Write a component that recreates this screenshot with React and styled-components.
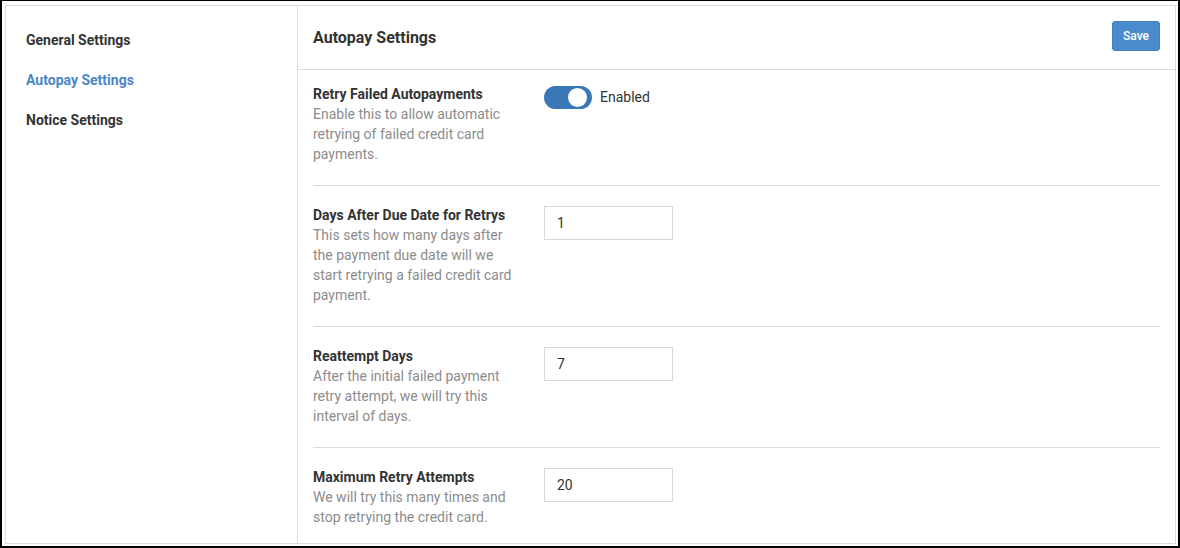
import React, { useState } from "react";
import styled, { createGlobalStyle } from "styled-components";

const GlobalStyle = createGlobalStyle`
  html, body {
    margin: 0;
    padding: 0;
    background: #fff;
  }
  body {
    font-family: Roboto, "Liberation Sans", Arial, sans-serif;
    font-size: 14px;
    color: #333;
  }
  * {
    box-sizing: border-box;
  }
`;

const Frame = styled.div`
  width: 1180px;
  height: 548px;
  display: flex;
  border-style: solid;
  border-color: #000;
  border-width: 1px 2px 2px 2px;
  padding: 4px 2px 2px 3px;
  background: #fff;
`;

const Card = styled.div`
  flex: 1;
  display: flex;
  border: 1px solid #dcdcdc;
  overflow: hidden;
`;

const Sidebar = styled.nav`
  width: 292px;
  flex-shrink: 0;
  border-right: 1px solid #dcdcdc;
  padding: 14px 20px 0;
  display: flex;
  flex-direction: column;
`;

const NavItem = styled.a`
  display: block;
  height: 40px;
  line-height: 40px;
  font-size: 14px;
  font-weight: 700;
  color: ${(p) => (p.$active ? "#4a86c6" : "#333")};
  text-decoration: none;
  cursor: pointer;
`;

const Main = styled.main`
  flex: 1;
  display: flex;
  flex-direction: column;
  min-width: 0;
`;

const Header = styled.header`
  height: 64px;
  flex-shrink: 0;
  display: flex;
  align-items: center;
  justify-content: space-between;
  padding: 0 15px 1px;
  border-bottom: 1px solid #dcdcdc;
`;

const Title = styled.h2`
  margin: 0;
  font-size: 16px;
  font-weight: 700;
  color: #333;
`;

const SaveButton = styled.button`
  width: 48px;
  height: 30px;
  border: 1px solid #3f7fbf;
  border-radius: 3px;
  background: #4a8bcb;
  color: #fff;
  font-family: inherit;
  font-size: 12px;
  font-weight: 500;
  cursor: pointer;
  margin-top: -2px;
`;

const Body = styled.div`
  padding: 0 15px;
`;

const Row = styled.div`
  display: flex;
  gap: 23px;
  padding: ${(p) => (p.$first ? "14px" : "19px")} 0 21px;
  border-bottom: ${(p) => (p.$last ? "none" : "1px solid #dcdcdc")};
`;

const LabelCol = styled.div`
  width: 208px;
  flex-shrink: 0;
  line-height: 20px;
`;

const Label = styled.div`
  font-weight: 700;
  color: #333;
`;

const Help = styled.div`
  color: #8c8c8c;
`;

const ControlCol = styled.div`
  display: flex;
  align-items: flex-start;
  gap: 8px;
  padding-top: ${(p) => p.$offset || 0}px;
`;

const Track = styled.button`
  position: relative;
  width: 48px;
  height: 23px;
  border: none;
  border-radius: 12px;
  padding: 0;
  background: ${(p) => (p.$on ? "#3a77b7" : "#ccc")};
  cursor: pointer;
`;

const Knob = styled.span`
  position: absolute;
  top: 2px;
  left: ${(p) => (p.$on ? "24px" : "4px")};
  width: 19px;
  height: 19px;
  border-radius: 50%;
  background: #fff;
`;

const SwitchText = styled.span`
  line-height: 23px;
  color: #333;
`;

const NumberInput = styled.input`
  width: 129px;
  height: 34px;
  border: 1px solid #d9d9d9;
  padding: 0 12px;
  font-family: inherit;
  font-size: 14px;
  color: #333;
  outline: none;
`;

const fields = [
  {
    label: "Days After Due Date for Retrys",
    help: "This sets how many days after the payment due date will we start retrying a failed credit card payment.",
    value: "1",
  },
  {
    label: "Reattempt Days",
    help: "After the initial failed payment retry attempt, we will try this interval of days.",
    value: "7",
  },
  {
    label: "Maximum Retry Attempts",
    help: "We will try this many times and stop retrying the credit card.",
    value: "20",
  },
];

const App = () => {
  const [enabled, setEnabled] = useState(true);
  const [values, setValues] = useState(fields.map((f) => f.value));

  return (
    <>
      <GlobalStyle />
      <Frame>
        <Card>
          <Sidebar>
            <NavItem>General Settings</NavItem>
            <NavItem $active>Autopay Settings</NavItem>
            <NavItem>Notice Settings</NavItem>
          </Sidebar>
          <Main>
            <Header>
              <Title>Autopay Settings</Title>
              <SaveButton>Save</SaveButton>
            </Header>
            <Body>
              <Row $first>
                <LabelCol>
                  <Label>Retry Failed Autopayments</Label>
                  <Help>
                    Enable this to allow automatic retrying of failed credit
                    card payments.
                  </Help>
                </LabelCol>
                <ControlCol $offset={2}>
                  <Track $on={enabled} onClick={() => setEnabled(!enabled)}>
                    <Knob $on={enabled} />
                  </Track>
                  <SwitchText>{enabled ? "Enabled" : "Disabled"}</SwitchText>
                </ControlCol>
              </Row>
              {fields.map((f, i) => (
                <Row key={f.label} $last={i === fields.length - 1}>
                  <LabelCol>
                    <Label>{f.label}</Label>
                    <Help>{f.help}</Help>
                  </LabelCol>
                  <ControlCol $offset={1}>
                    <NumberInput
                      value={values[i]}
                      onChange={(e) =>
                        setValues(values.map((v, j) => (j === i ? e.target.value : v)))
                      }
                    />
                  </ControlCol>
                </Row>
              ))}
            </Body>
          </Main>
        </Card>
      </Frame>
    </>
  );
};

export default App;
